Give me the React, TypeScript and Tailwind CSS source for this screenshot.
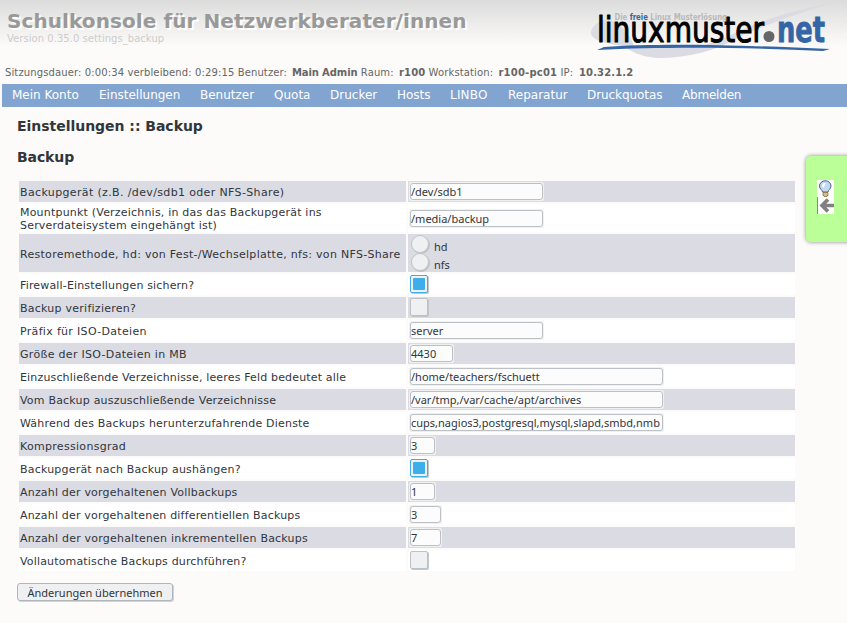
import React from "react";

const SANS = "font-['DejaVu_Sans','Liberation_Sans',sans-serif]";
const NOTO = "font-['Noto_Sans','Open_Sans',sans-serif]";

const nav = [
  { label: "Mein Konto", box: "w-[87px]" },
  { label: "Einstellungen", box: "w-[101px]" },
  { label: "Benutzer", box: "w-[74px]" },
  { label: "Quota", box: "w-[56px]" },
  { label: "Drucker", box: "w-[67px]" },
  { label: "Hosts", box: "w-[53px]" },
  { label: "LINBO", box: "w-[58px] tracking-[0.2px]" },
  { label: "Reparatur", box: "w-[79px]" },
  { label: "Druckquotas", box: "w-[95px] tracking-[-0.08px]" },
  { label: "Abmelden", box: "tracking-[-0.2px]" },
];

type Field =
  | { kind: "text"; value: string; width: string }
  | { kind: "check"; on: boolean }
  | { kind: "radio"; options: string[] };

type Row = { label: string; tracking: string; height?: string; field: Field };

const rows: Row[] = [
  { label: "Backupgerät (z.B. /dev/sdb1 oder NFS-Share)", tracking: "tracking-[0.36px]", field: { kind: "text", value: "/dev/sdb1", width: "w-[135px]" } },
  { label: "Mountpunkt (Verzeichnis, in das das Backupgerät ins Serverdateisystem eingehängt ist)", tracking: "tracking-[0.2px]", height: "h-[28px]", field: { kind: "text", value: "/media/backup", width: "w-[135px]" } },
  { label: "Restoremethode, hd: von Fest-/Wechselplatte, nfs: von NFS-Share", tracking: "tracking-[0.29px]", height: "h-[38px]", field: { kind: "radio", options: ["hd", "nfs"] } },
  { label: "Firewall-Einstellungen sichern?", tracking: "tracking-[0.16px]", field: { kind: "check", on: true } },
  { label: "Backup verifizieren?", tracking: "tracking-[0.25px]", field: { kind: "check", on: false } },
  { label: "Präfix für ISO-Dateien", tracking: "tracking-[0.32px]", field: { kind: "text", value: "server", width: "w-[135px]" } },
  { label: "Größe der ISO-Dateien in MB", tracking: "tracking-[0.3px]", field: { kind: "text", value: "4430", width: "w-[45px]" } },
  { label: "Einzuschließende Verzeichnisse, leeres Feld bedeutet alle", tracking: "tracking-[0.16px]", field: { kind: "text", value: "/home/teachers/fschuett", width: "w-[255px]" } },
  { label: "Vom Backup auszuschließende Verzeichnisse", tracking: "tracking-[0.2px]", field: { kind: "text", value: "/var/tmp,/var/cache/apt/archives", width: "w-[255px]" } },
  { label: "Während des Backups herunterzufahrende Dienste", tracking: "tracking-[0.2px]", field: { kind: "text", value: "cups,nagios3,postgresql,mysql,slapd,smbd,nmb", width: "w-[255px]" } },
  { label: "Kompressionsgrad", tracking: "tracking-[0.3px]", field: { kind: "text", value: "3", width: "w-[27px]" } },
  { label: "Backupgerät nach Backup aushängen?", tracking: "tracking-[0.2px]", field: { kind: "check", on: true } },
  { label: "Anzahl der vorgehaltenen Vollbackups", tracking: "tracking-[0.19px]", field: { kind: "text", value: "1", width: "w-[27px]" } },
  { label: "Anzahl der vorgehaltenen differentiellen Backups", tracking: "tracking-[0.18px]", field: { kind: "text", value: "3", width: "w-[33px]" } },
  { label: "Anzahl der vorgehaltenen inkrementellen Backups", tracking: "tracking-[0.21px]", field: { kind: "text", value: "7", width: "w-[33px]" } },
  { label: "Vollautomatische Backups durchführen?", tracking: "tracking-[0.16px]", field: { kind: "check", on: false } },
];

function Control({ field }: { field: Field }) {
  if (field.kind === "text") {
    return (
      <div className={`ml-px h-[19px] rounded-[2px] bg-[#eff0f1] p-px ${field.width}`}>
        <div className={`h-[17px] overflow-hidden rounded-[3px] border border-[#bcc1c6] bg-[#fcfcfc] text-[11px] leading-[15px] whitespace-nowrap ${NOTO}`}>
          {field.value}
        </div>
      </div>
    );
  }
  if (field.kind === "check") {
    return (
      <div
        className={`mb-px ml-[2px] flex h-[18px] w-[18px] items-center justify-center rounded-[2px] border bg-[#eff0f1] shadow-[1px_1px_0_#c3c5c9] ${
          field.on ? "border-[#3daee9]" : "border-[#bdc1c5]"
        }`}
      >
        {field.on && <div className="h-3 w-3 rounded-[1px] bg-[#3daee9]" />}
      </div>
    );
  }
  return (
    <div className="ml-[3px] flex flex-col">
      {field.options.map((o) => (
        <div key={o} className="flex h-[18px] items-start">
          <div className="h-[18px] w-[18px] rounded-full border border-[#c1c4c8] bg-[#eff0f1] shadow-[1px_1px_0_#bfc1c6]" />
          <span className={`ml-[5px] pt-[4px] text-[11px] leading-[15px] ${NOTO}`}>{o}</span>
        </div>
      ))}
    </div>
  );
}

function Logo() {
  return (
    <svg width="262" height="62" viewBox="585 0 262 62" className="shrink-0">
      <path
        d="M832 3 C800 9 775 16 748 27 C735 33 715 43 700 46 L634 46 C631 38 627 27 608 19 C596 21 590 29 591 34 C593 40 604 43 622 46 C632 51 641 58 662 58 C690 57 716 51 737 38 C763 25 803 12 832 3Z"
        fill="#dadbe3"
      />
      <path d="M597 50 L604 47 C660 43 740 45 830 49 L823 51 C740 47 660 47 597 50Z" fill="#3465a4" />
      <g fontFamily="DejaVu Sans">
        <text x="614.500" y="20" fontSize="8.5" fontWeight="bold" fill="#b9b9b9" textLength="112.500" lengthAdjust="spacingAndGlyphs">
          Die <tspan fill="#3465a4">freie</tspan> Linux Musterlösung
        </text>
        <text x="597" y="42" fontSize="36" fill="#000" stroke="#000" strokeWidth="1.1" strokeLinejoin="round" textLength="167" lengthAdjust="spacingAndGlyphs">
          linuxmuster
        </text>
        <text x="777" y="42" fontSize="35" fontWeight="bold" fill="#3465a4" stroke="#3465a4" strokeWidth="0.8" strokeLinejoin="round" textLength="48" lengthAdjust="spacingAndGlyphs">
          net
        </text>
      </g>
      <circle cx="769" cy="36.500" r="5.500" fill="#666" />
    </svg>
  );
}

export default function App() {
  return (
    <div className={`relative h-[623px] w-[847px] overflow-hidden bg-[#fcfbf9] text-[#31363b] ${SANS}`}>
      <header className="flex h-[62px] justify-between bg-linear-to-b from-[#dcdcdc] to-[#fcfbf9] to-[46px]">
        <div className="pt-[9px] pl-[7px] whitespace-nowrap">
          <h1 className="text-[20px] leading-[24px] font-bold tracking-[0.08px] text-[#999] [text-shadow:2px_2px_0_#fff]">Schulkonsole für Netzwerkberater/innen</h1>
          <p className="text-[10px] leading-[12px] tracking-[0.04px] text-[#ccc]">Version 0.35.0 settings_backup</p>
        </div>
        <Logo />
      </header>

      <div className="h-[22px] pt-[5px] pl-[5px] text-[10px] leading-[12px] tracking-[0.12px] whitespace-nowrap text-[#666]">
        Sitzungsdauer: 0:00:34 verbleibend: 0:29:15 Benutzer: <b className="ml-[1.5px] tracking-[-0.1px]">Main Admin</b> Raum:{" "}
        <b className="ml-[2px]">r100</b> Workstation: <b className="ml-[2px] tracking-[0.2px]">r100-pc01</b> IP: <b className="ml-[2.5px]">10.32.1.2</b>
      </div>

      <nav className="ml-[2px] flex h-[23px] bg-[#82a4d1] pl-[10px] text-[12px] leading-[23px] whitespace-nowrap text-white">
        {nav.map((n) => (
          <span key={n.label} className={n.box}>
            {n.label}
          </span>
        ))}
      </nav>

      <main className="pl-[17px]">
        <h2 className="pt-[10px] text-[14px] leading-[18px] font-bold tracking-[-0.03px]">Einstellungen :: Backup</h2>
        <h2 className="pt-[13px] text-[14px] leading-[18px] font-bold tracking-[-0.1px]">Backup</h2>

        <div className="mt-[15px] ml-[2px] flex w-[776px] flex-col gap-[2px]">
          {rows.map((r, i) => (
            <div key={r.label} className={`grid grid-cols-2 gap-[2px] ${r.height ?? "h-[21px]"}`}>
              <div className={`flex items-center pl-px text-[11px] leading-[13px] ${r.tracking} ${i % 2 ? "bg-white" : "bg-[#dadbe3]"}`}>
                <span className={r.field.kind === "radio" ? "pt-[2px]" : "pt-px"}>{r.label}</span>
              </div>
              <div className={`flex items-center ${i % 2 ? "bg-white" : "bg-[#dadbe3]"}`}>
                <Control field={r.field} />
              </div>
            </div>
          ))}
        </div>

        <button className={`mt-3 block h-[18px] w-[156px] rounded-[3px] border border-[#b0b5ba] bg-[#eff0f1] text-[11px] leading-[17px] whitespace-nowrap shadow-[1px_1px_0_#d2d3d5] ${NOTO}`}>
          Änderungen übernehmen
        </button>
      </main>

      <aside className="absolute top-[156px] left-[806px] h-[86px] w-[48px] rounded-[5px] bg-[#bbff99] shadow-[0_0_4px_#888]">
        <svg width="17" height="34" viewBox="0 0 17 34" className="mt-6 ml-[11px]">
          <rect width="17" height="34" fill="#fff" />
          <path d="M5.500 12 C5.500 10 2.500 9 2.500 6 A5.700 5.200 0 0 1 14 6 C14 9 11 10 11 12Z" fill="#c5d8f2" stroke="#4b6288" />
          <path d="M5 5 Q6 2.500 9 3 Q7 5 7 8 Q5 7 5 5Z" fill="#fff" />
          <path d="M6 12.500h5v3h-1v1h-3v-1h-1z" fill="#d6c47c" stroke="#77683a" strokeWidth=".7" />
          <path d="M.5 17v17" stroke="#888" />
          <path d="M17 25.500H5M11 19.500l-6 6L11 31.500" fill="none" stroke="#808080" strokeWidth="3.600" />
        </svg>
      </aside>
    </div>
  );
}
